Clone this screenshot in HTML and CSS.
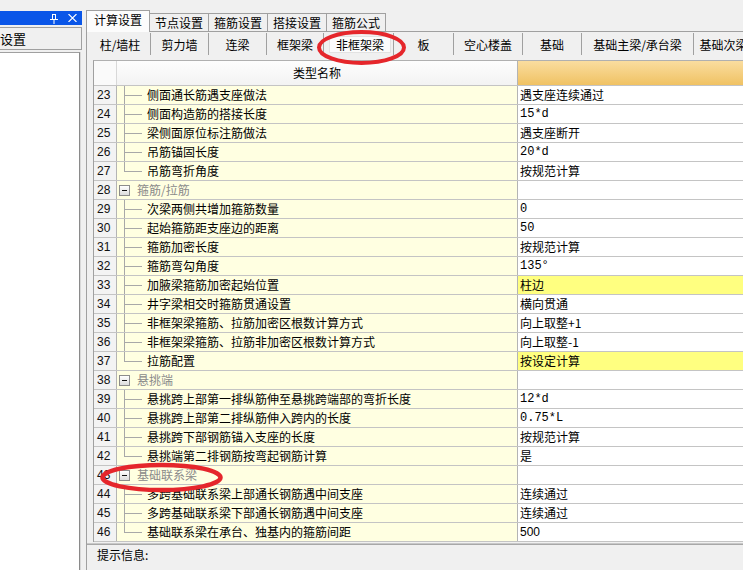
FILE: index.html
```html
<!DOCTYPE html>
<html lang="zh-CN">
<head>
<meta charset="utf-8">
<title>计算设置</title>
<link rel="stylesheet" href="styles.css">
</head>
<body>
<div class="app">
  <aside class="side">
    <div class="side-top"></div>
    <div class="side-title">
      <svg class="ico-pin" width="8" height="10" viewBox="0 0 8 10"><path d="M2 0.5H6M2.5 0.5V5.5M5.5 0.5V5.5M0 5.5H8M4 5.5V10" stroke="#fff" stroke-width="1" fill="none"/></svg>
      <svg class="ico-x" width="9" height="8" viewBox="0 0 9 8"><path d="M0.5 0L8.5 8M8.5 0L0.5 8" stroke="#fff" stroke-width="1.1" fill="none"/></svg>
    </div>
    <div class="side-node">设置</div>
    <div class="side-tree"></div>
  </aside>
  <div class="split"></div>
  <main class="main">
    <div class="tabs">
      <div class="tab active">计算设置</div>
      <div class="tab">节点设置</div>
      <div class="tab">箍筋设置</div>
      <div class="tab">搭接设置</div>
      <div class="tab">箍筋公式</div>
      <div class="tab-fill"></div>
    </div>
    <div class="panel">
      <div class="subtabs">
        <div class="st">柱/墙柱</div>
        <div class="st">剪力墙</div>
        <div class="st">连梁</div>
        <div class="st">框架梁</div>
        <div class="st sel"><span class="sel-box">非框架梁</span></div>
        <div class="st">板</div>
        <div class="st">空心楼盖</div>
        <div class="st">基础</div>
        <div class="st">基础主梁/承台梁</div>
        <div class="st">基础次梁</div>
      </div>
      <div class="grid">
        <div class="row head"><div class="num"></div><div class="name">类型名称</div><div class="val"></div></div>
        <div class="row"><div class="num">23</div><div class="name"><span class="br"></span>侧面通长筋遇支座做法</div><div class="val">遇支座连续通过</div></div>
        <div class="row"><div class="num">24</div><div class="name"><span class="br"></span>侧面构造筋的搭接长度</div><div class="val lat">15*d</div></div>
        <div class="row"><div class="num">25</div><div class="name"><span class="br"></span>梁侧面原位标注筋做法</div><div class="val">遇支座断开</div></div>
        <div class="row"><div class="num">26</div><div class="name"><span class="br"></span>吊筋锚固长度</div><div class="val lat">20*d</div></div>
        <div class="row"><div class="num">27</div><div class="name"><span class="br last"></span>吊筋弯折角度</div><div class="val">按规范计算</div></div>
        <div class="row grp"><div class="num">28</div><div class="name"><span class="box"></span><span class="gt">箍筋/拉筋</span></div><div class="val"></div></div>
        <div class="row"><div class="num">29</div><div class="name"><span class="br"></span>次梁两侧共增加箍筋数量</div><div class="val lat">0</div></div>
        <div class="row"><div class="num">30</div><div class="name"><span class="br"></span>起始箍筋距支座边的距离</div><div class="val lat">50</div></div>
        <div class="row"><div class="num">31</div><div class="name"><span class="br"></span>箍筋加密长度</div><div class="val">按规范计算</div></div>
        <div class="row"><div class="num">32</div><div class="name"><span class="br"></span>箍筋弯勾角度</div><div class="val lat">135°</div></div>
        <div class="row"><div class="num">33</div><div class="name"><span class="br"></span>加腋梁箍筋加密起始位置</div><div class="val hl">柱边</div></div>
        <div class="row"><div class="num">34</div><div class="name"><span class="br"></span>井字梁相交时箍筋贯通设置</div><div class="val">横向贯通</div></div>
        <div class="row"><div class="num">35</div><div class="name"><span class="br"></span>非框架梁箍筋、拉筋加密区根数计算方式</div><div class="val">向上取整+1</div></div>
        <div class="row"><div class="num">36</div><div class="name"><span class="br"></span>非框架梁箍筋、拉筋非加密区根数计算方式</div><div class="val">向上取整-1</div></div>
        <div class="row"><div class="num">37</div><div class="name"><span class="br last"></span>拉筋配置</div><div class="val hl">按设定计算</div></div>
        <div class="row grp"><div class="num">38</div><div class="name"><span class="box"></span><span class="gt">悬挑端</span></div><div class="val"></div></div>
        <div class="row"><div class="num">39</div><div class="name"><span class="br"></span>悬挑跨上部第一排纵筋伸至悬挑跨端部的弯折长度</div><div class="val lat">12*d</div></div>
        <div class="row"><div class="num">40</div><div class="name"><span class="br"></span>悬挑跨上部第二排纵筋伸入跨内的长度</div><div class="val lat">0.75*L</div></div>
        <div class="row"><div class="num">41</div><div class="name"><span class="br"></span>悬挑跨下部钢筋锚入支座的长度</div><div class="val">按规范计算</div></div>
        <div class="row"><div class="num">42</div><div class="name"><span class="br last"></span>悬挑端第二排钢筋按弯起钢筋计算</div><div class="val">是</div></div>
        <div class="row grp"><div class="num">43</div><div class="name"><span class="box"></span><span class="gt">基础联系梁</span></div><div class="val"></div></div>
        <div class="row"><div class="num">44</div><div class="name"><span class="br"></span>多跨基础联系梁上部通长钢筋遇中间支座</div><div class="val">连续通过</div></div>
        <div class="row"><div class="num">45</div><div class="name"><span class="br"></span>多跨基础联系梁下部通长钢筋遇中间支座</div><div class="val">连续通过</div></div>
        <div class="row"><div class="num">46</div><div class="name"><span class="br last"></span>基础联系梁在承台、独基内的箍筋间距</div><div class="val sans">500</div></div>
      </div>
      <div class="hint">提示信息:</div>
    </div>
  </main>
</div>
<svg class="marks" width="743" height="570" viewBox="0 0 743 570">
  <ellipse cx="361.5" cy="47.5" rx="42.5" ry="15.5" fill="none" stroke="#e5262b" stroke-width="4"/>
  <ellipse cx="161.5" cy="477.5" rx="59" ry="12.5" fill="none" stroke="#e5262b" stroke-width="4.5"/>
</svg>
</body>
</html>
```
FILE: styles.css
```css
* { box-sizing: border-box; }
html, body { margin: 0; padding: 0; }
body {
  width: 743px;
  height: 570px;
  overflow: hidden;
  position: relative;
  background: #f0f0f0;
  font-family: "Noto Sans CJK SC", "Noto Sans CJK JP", sans-serif;
  font-size: 12px;
  color: #000;
}
.app { display: flex; height: 570px; }

/* left dock */
.side { width: 82px; flex: none; display: flex; flex-direction: column; }
.side-top { height: 11px; flex: none; }
.side-title {
  height: 14px; flex: none;
  background: #0a56e8;
  display: flex; align-items: center; justify-content: flex-end;
  gap: 10px; padding-right: 5px;
}
.ico-pin { margin-top: 1px; }
.side-node {
  height: 23px; flex: none; margin-top: 2px;
  border-top: 1px solid #a0a0a0;
  border-bottom: 1px solid #a0a0a0;
  border-right: 1px solid #a0a0a0;
  background: #f0f0f0;
  line-height: 21px; font-size: 13px;
}
.side-tree {
  flex: 1; margin-top: 2px; width: 80px;
  background: #fff;
  border-top: 1px solid #a0a0a0;
  border-right: 1px solid #8a8a8a;
  box-shadow: 1px 0 0 #d8d8d8;
}
.split { width: 4px; flex: none; }

/* main */
.main { flex: 1; min-width: 0; display: flex; flex-direction: column; overflow: hidden; }
.tabs { height: 32px; flex: none; display: flex; align-items: flex-end; }
.tab {
  flex: none; height: 19px;
  padding: 0 5px;
  border: 1px solid #a0a0a0;
  border-left: none;
  background: #f0f0f0;
  line-height: 17px;
  font-size: 12px; white-space: nowrap;
}
.tab.active {
  height: 22px; padding: 0 7px;
  border-left: 1px solid #a0a0a0;
  border-bottom: none;
  background: #fcfcfc;
  line-height: 18px;
}
.tab-fill { flex: 1; height: 1px; background: #a0a0a0; }

.panel {
  flex: 1; min-height: 0;
  border-left: 1px solid #a0a0a0;
  display: flex; flex-direction: column;
  padding-top: 1px;
}
.subtabs {
  height: 22px; flex: none;
  display: flex; margin-left: 3px;
  white-space: nowrap;
}
.st {
  flex: none; height: 22px;
  border-right: 1px solid #a0a0a0;
  display: flex; align-items: center; justify-content: center;
  font-size: 12px;
}
.st:nth-child(1) { width: 61px; }
.st:nth-child(2) { width: 58px; }
.st:nth-child(3) { width: 58px; }
.st:nth-child(4) { width: 57px; }
.st:nth-child(5) { width: 70px; padding-left: 6px; padding-right: 3px; }
.st:nth-child(6) { width: 60px; }
.st:nth-child(7) { width: 69px; }
.st:nth-child(8) { width: 59px; }
.st:nth-child(9) { width: 112px; }
.st:nth-child(10) { width: 60px; }
.sel-box {
  padding: 0 6px; line-height: 15px;
  background: #fbfbfb;
  border: 1px solid #e2e2e2;
}

/* grid */
.grid {
  flex: none;
  margin: 5px 0 0 6px;
  border-left: 1px solid #a0a0a0;
  border-top: 1px solid #b0b0b0;
  width: 700px;
  background: #fff;
}
.row { display: flex; height: 19px; border-bottom: 1px solid #c4c4c4; }
.row.head { height: 25px; border-bottom: 1px solid #c4c4c4; }
.num {
  flex: none; width: 23px;
  background: #f3f3f3;
  border-right: 1px solid #b4b4b4;
  font-family: "Liberation Sans", Arial, sans-serif;
  font-size: 12px; line-height: 18px;
  padding-left: 3px; color: #111;
}
.head .num { background: #fafafa; border-right-color: #d8d8d8; }
.name {
  flex: none; width: 401px;
  background: #ffffe1;
  border-right: 1px solid #b4b4b4;
  display: flex; align-items: stretch;
  line-height: 18px; white-space: nowrap; overflow: hidden;
}
.head .name {
  background: linear-gradient(#fdfdfd, #f3f3f3);
  justify-content: center; align-items: center;
  line-height: 24px;
}
.val {
  flex: none; width: 240px;
  background: #fff;
  padding-left: 2px;
  line-height: 18px; white-space: nowrap;
}
.head .val { background: linear-gradient(#fadd9f, #f0c263); }
.val.hl { background: #ffff80; }
.val.lat { font-family: "Liberation Mono", "DejaVu Sans Mono", monospace; font-size: 12px; }
.val.sans { font-family: "Liberation Sans", Arial, sans-serif; font-size: 12px; }

.br {
  flex: none; width: 23px; margin-left: 7px;
  background:
    linear-gradient(#a8a8a8, #a8a8a8) 0 0 / 1px 100% no-repeat,
    linear-gradient(#a8a8a8, #a8a8a8) 0 9px / 18px 1px no-repeat;
}
.br.last {
  background:
    linear-gradient(#a8a8a8, #a8a8a8) 0 0 / 1px 10px no-repeat,
    linear-gradient(#a8a8a8, #a8a8a8) 0 9px / 18px 1px no-repeat;
}
.box {
  flex: none; align-self: center;
  width: 11px; height: 11px; margin-left: 2px; margin-right: 7px;
  border: 1px solid #8c8c8c;
  background:
    linear-gradient(#111, #111) center / 5px 1px no-repeat,
    linear-gradient(#ffffff, #dcdcdc);
}
.gt { color: #8a8a8a; }

.hint {
  flex: 1;
  margin-top: 1px;
  border-top: 1px solid #c8c8c8;
  box-shadow: inset 0 1px 0 #a8a8a8;
  padding: 3px 0 0 10px;
  line-height: 16px;
}

.marks { position: absolute; left: 0; top: 0; pointer-events: none; }
```
